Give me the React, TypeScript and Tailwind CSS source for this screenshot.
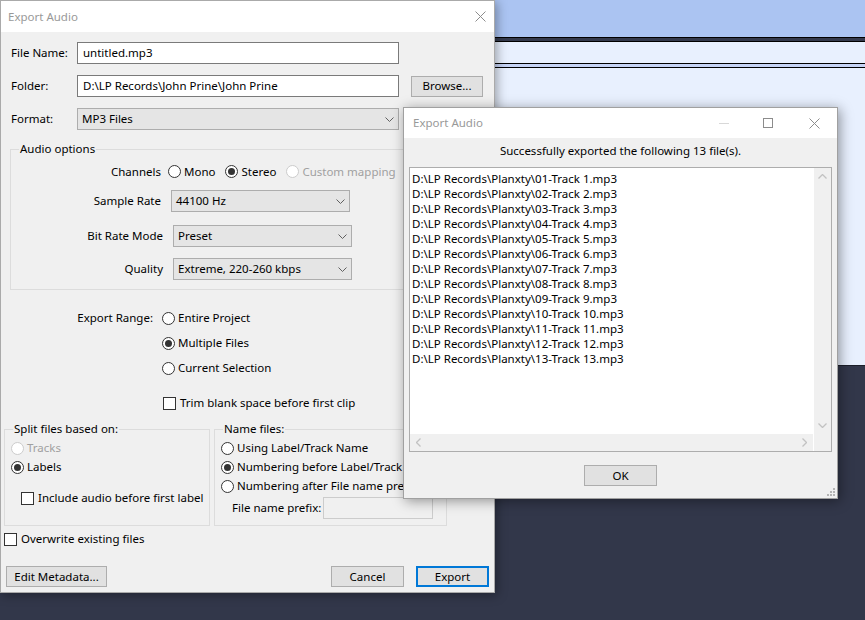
import type { ReactNode } from "react";

function Chevron() {
  return (
    <svg width="9" height="5" viewBox="0 0 9 5" className="shrink-0">
      <path d="M0.5 0.5 L4.5 4.5 L8.5 0.5" fill="none" stroke="#606060" strokeWidth="1" />
    </svg>
  );
}

function Radio({ checked, disabled, children }: { checked?: boolean; disabled?: boolean; children: ReactNode }) {
  return (
    <div className="flex items-center h-[16px] gap-[3px]">
      <span
        className={`shrink-0 w-[13px] h-[13px] rounded-full border bg-white flex items-center justify-center ${
          disabled ? "border-[#cccccc]" : "border-[#333333]"
        }`}
      >
        {checked && <span className="w-[7px] h-[7px] rounded-full bg-[#333333]" />}
      </span>
      <span className={disabled ? "text-[#a0a0a0]" : ""}>{children}</span>
    </div>
  );
}

function Check({ children }: { children: ReactNode }) {
  return (
    <div className="flex items-center h-[16px] gap-[4px]">
      <span className="shrink-0 w-[13px] h-[13px] border border-[#333333] bg-white" />
      <span>{children}</span>
    </div>
  );
}

function Select({ value, className }: { value: string; className: string }) {
  return (
    <div
      className={`h-[22px] bg-[#e5e5e5] border border-[#adadad] flex items-center justify-between pl-[4px] pr-[4px] ${className}`}
    >
      <span>{value}</span>
      <Chevron />
    </div>
  );
}

function Button({ children, className, primary }: { children: ReactNode; className: string; primary?: boolean }) {
  return (
    <div
      className={`h-[21px] bg-[#e1e1e1] flex items-center justify-center ${
        primary ? "border-2 border-[#0078d7]" : "border border-[#adadad]"
      } ${className}`}
    >
      {children}
    </div>
  );
}

const files = Array.from({ length: 13 }, (_, i) => {
  const n = i + 1;
  return `D:\\LP Records\\Planxty\\${String(n).padStart(2, "0")}-Track ${n}.mp3`;
});

function MainDialog() {
  return (
    <div className="absolute left-0 top-0 w-[495px] h-[593px] bg-[#f0f0f0] border border-[#aaaaaa] shadow-[2px_2px_10px_rgba(0,0,0,0.35)] flex flex-col">
      <div className="h-[31px] bg-white flex items-center justify-between pl-[7px] pr-[8px] shrink-0">
        <span className="text-[#999999]">Export Audio</span>
        <svg width="11" height="11" viewBox="0 0 11 11">
          <path d="M0.5 0.5 L10.5 10.5 M10.5 0.5 L0.5 10.5" stroke="#8c8c8c" strokeWidth="1" />
        </svg>
      </div>

      <div className="flex flex-col">
        <div className="flex items-center mt-[10px] pl-[10px]">
          <span className="w-[66px]">File Name:</span>
          <div className="w-[322px] h-[22px] bg-white border border-[#7a7a7a] flex items-center pl-[5px]">untitled.mp3</div>
        </div>
        <div className="flex items-center mt-[11px] pl-[10px]">
          <span className="w-[66px]">Folder:</span>
          <div className="w-[322px] h-[22px] bg-white border border-[#7a7a7a] flex items-center pl-[5px]">
            D:\LP Records\John Prine\John Prine
          </div>
          <Button className="w-[72px] ml-[12px]">Browse...</Button>
        </div>
        <div className="flex items-center mt-[11px] pl-[10px]">
          <span className="w-[66px]">Format:</span>
          <Select value="MP3 Files" className="w-[322px]" />
        </div>

        <fieldset className="mt-[11px] mx-[9px] border border-[#dcdcdc] pb-[9px]">
          <legend className="ml-[8px] px-[1px] leading-[16px]">Audio options</legend>
          <div className="flex items-center mt-[6px] h-[17px]">
            <span className="w-[150px] text-right">Channels</span>
            <div className="flex items-center gap-[10px] ml-[7px]">
              <Radio>Mono</Radio>
              <Radio checked>Stereo</Radio>
              <Radio disabled>Custom mapping</Radio>
            </div>
          </div>
          <div className="flex items-center mt-[10px]">
            <span className="w-[150px] text-right">Sample Rate</span>
            <Select value="44100 Hz" className="w-[179px] ml-[10px]" />
          </div>
          <div className="flex items-center mt-[13px]">
            <span className="w-[152px] text-right">Bit Rate Mode</span>
            <Select value="Preset" className="w-[179px] ml-[10px]" />
          </div>
          <div className="flex items-center mt-[11px]">
            <span className="w-[152px] text-right">Quality</span>
            <Select value="Extreme, 220-260 kbps" className="w-[179px] ml-[10px]" />
          </div>
        </fieldset>

        <div className="flex mt-[20px]">
          <span className="w-[152px] text-right leading-[16px]">Export Range:</span>
          <div className="flex flex-col ml-[9px]">
            <Radio>Entire Project</Radio>
            <div className="mt-[9px]">
              <Radio checked>Multiple Files</Radio>
            </div>
            <div className="mt-[9px]">
              <Radio>Current Selection</Radio>
            </div>
            <div className="mt-[19px] ml-[1px]">
              <Check>Trim blank space before first clip</Check>
            </div>
          </div>
        </div>

        <div className="flex items-stretch gap-[4px] mt-[10px] pl-[3px]">
          <fieldset className="w-[206px] border border-[#dcdcdc] pl-[6px]">
            <legend className="ml-[2px] px-[1px] leading-[16px]">Split files based on:</legend>
            <div className="mt-[3px]">
              <Radio disabled>Tracks</Radio>
            </div>
            <div className="mt-[3px]">
              <Radio checked>Labels</Radio>
            </div>
            <div className="mt-[15px] ml-[10px]">
              <Check>Include audio before first label</Check>
            </div>
          </fieldset>
          <fieldset className="w-[233px] border border-[#dcdcdc] pl-[6px] pb-[6px] overflow-hidden">
            <legend className="ml-[2px] px-[1px] leading-[16px]">Name files:</legend>
            <div className="mt-[3px]">
              <Radio>Using Label/Track Name</Radio>
            </div>
            <div className="mt-[3px]">
              <Radio checked>Numbering before Label/Track Name</Radio>
            </div>
            <div className="mt-[3px]">
              <Radio>Numbering after File name prefix</Radio>
            </div>
            <div className="flex items-center mt-[3px] ml-[11px]">
              <span className="w-[91px]">File name prefix:</span>
              <div className="shrink-0 w-[110px] h-[22px] border border-[#cccccc] bg-[#f0f0f0]" />
            </div>
          </fieldset>
        </div>

        <div className="mt-[5px] pl-[3px]">
          <Check>Overwrite existing files</Check>
        </div>

        <div className="flex items-center mt-[19px] pl-[5px]">
          <Button className="w-[101px]">Edit Metadata...</Button>
          <Button className="w-[73px] ml-[224px]">Cancel</Button>
          <Button primary className="w-[73px] ml-[12px]">Export</Button>
        </div>
      </div>
    </div>
  );
}

function ResultDialog() {
  return (
    <div className="absolute left-[403px] top-[107px] w-[435px] h-[392px] bg-[#f0f0f0] border border-[#a0a0a0] shadow-[2px_2px_12px_rgba(0,0,0,0.4)] flex flex-col">
      <div className="h-[30px] bg-white flex items-center shrink-0 pl-[9px]">
        <span className="text-[#999999] flex-1">Export Audio</span>
        <span className="w-[10px] h-[1px] bg-[#d8d8d8]" />
        <span className="w-[10px] h-[10px] border border-[#8c8c8c] ml-[34px]" />
        <svg width="11" height="11" viewBox="0 0 11 11" className="ml-[36px] mr-[17px]">
          <path d="M0.5 0.5 L10.5 10.5 M10.5 0.5 L0.5 10.5" stroke="#8c8c8c" strokeWidth="1" />
        </svg>
      </div>
      <div className="text-center mt-[5px] leading-[16px]">Successfully exported the following 13 file(s).</div>
      <div className="mx-[5px] mt-[8px] h-[285px] border border-[#adadad] bg-white flex flex-col">
        <div className="flex flex-1 min-h-0">
          <div className="flex-1 pl-[2px] pt-[3px] flex flex-col">
            {files.map((f) => (
              <div key={f} className="h-[15px] leading-[15px]">
                {f}
              </div>
            ))}
          </div>
          <div className="w-[17px] bg-[#f0f0f0] flex flex-col items-center justify-between py-[6px]">
            <svg width="9" height="5" viewBox="0 0 9 5">
              <path d="M0.5 4.5 L4.5 0.5 L8.5 4.5" fill="none" stroke="#c2c2c2" strokeWidth="1.3" />
            </svg>
            <svg width="9" height="5" viewBox="0 0 9 5">
              <path d="M0.5 0.5 L4.5 4.5 L8.5 0.5" fill="none" stroke="#c2c2c2" strokeWidth="1.3" />
            </svg>
          </div>
        </div>
        <div className="flex h-[17px]">
          <div className="flex-1 bg-[#f0f0f0] flex items-center justify-between px-[6px]">
            <svg width="5" height="9" viewBox="0 0 5 9">
              <path d="M4.5 0.5 L0.5 4.5 L4.5 8.5" fill="none" stroke="#c2c2c2" strokeWidth="1.3" />
            </svg>
            <svg width="5" height="9" viewBox="0 0 5 9">
              <path d="M0.5 0.5 L4.5 4.5 L0.5 8.5" fill="none" stroke="#c2c2c2" strokeWidth="1.3" />
            </svg>
          </div>
          <div className="w-[17px] bg-[#f0f0f0] ml-[1px]" />
        </div>
      </div>
      <div className="flex justify-center mt-[13px]">
        <Button className="w-[73px]">OK</Button>
      </div>
      <div className="flex justify-end mt-auto pr-[2px] pb-[2px]">
        <svg width="8" height="8" viewBox="0 0 8 8">
          <g fill="#b4b4b4">
            <rect x="6" y="0" width="2" height="2" />
            <rect x="3" y="3" width="2" height="2" />
            <rect x="6" y="3" width="2" height="2" />
            <rect x="0" y="6" width="2" height="2" />
            <rect x="3" y="6" width="2" height="2" />
            <rect x="6" y="6" width="2" height="2" />
          </g>
        </svg>
      </div>
    </div>
  );
}

export default function App() {
  return (
    <div className="relative w-[865px] h-[620px] overflow-hidden whitespace-nowrap font-['Noto_Sans',sans-serif] text-[11.5px] text-black">
      <div className="flex flex-col h-full">
        <div className="h-[37px] bg-[#abc4f2]" />
        <div className="h-[5px] bg-[#343a4d] border-y border-black" />
        <div className="h-[21px] bg-[#e8f0fe]" />
        <div className="h-[5px] bg-[#c5d3f5] border-y border-black" />
        <div className="h-[298px] bg-[#e8f0fe] border-b border-[#1c1f2a]" />
        <div className="flex-1 bg-[#32374a]" />
      </div>
      <MainDialog />
      <ResultDialog />
    </div>
  );
}
